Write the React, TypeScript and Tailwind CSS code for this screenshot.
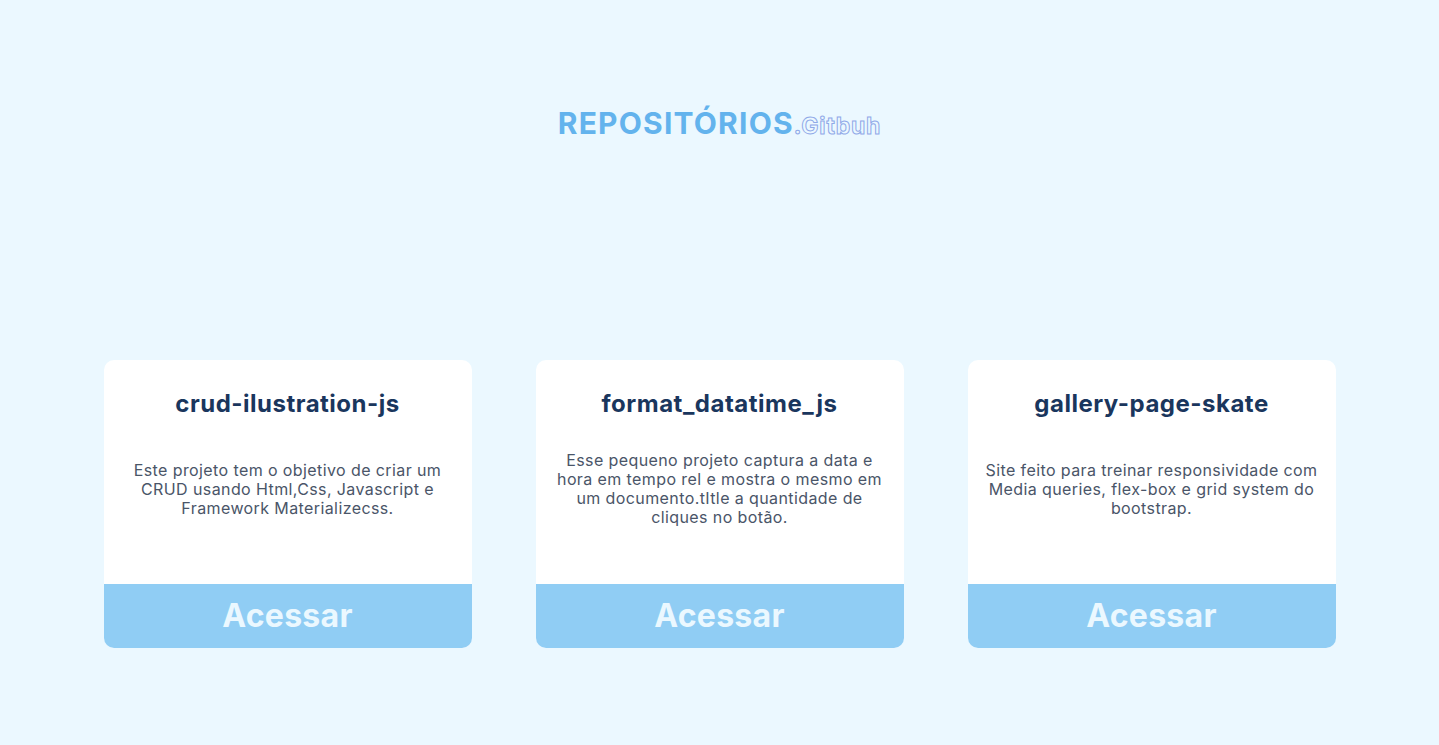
import React from "react";

const repos = [
  {
    name: "crud-ilustration-js",
    description:
      "Este projeto tem o objetivo de criar um CRUD usando Html,Css, Javascript e Framework Materializecss.",
  },
  {
    name: "format_datatime_js",
    description:
      "Esse pequeno projeto captura a data e hora em tempo rel e mostra o mesmo em um documento.tItle a quantidade de cliques no botão.",
  },
  {
    name: "gallery-page-skate",
    description:
      "Site feito para treinar responsividade com Media queries, flex-box e grid system do bootstrap.",
  },
];

function RepoCard({ name, description }: { name: string; description: string }) {
  return (
    <div className="flex h-[288px] w-[368px] flex-col overflow-hidden rounded-[10px] bg-white">
      <h2 className="pt-[28px] text-center text-[24px] font-bold leading-[32px] tracking-[0.5px] text-[#1a365d]">
        {name}
      </h2>
      <div className="flex flex-1 items-center justify-center px-[12px] pb-[26px]">
        <p className="text-center text-[16px] leading-[19px] tracking-[0.4px] text-[#4a5568]">
          {description}
        </p>
      </div>
      <a
        href="#"
        className="flex h-16 items-center justify-center bg-[#90cdf4] text-[32px] font-bold tracking-[0.3px] text-[#ebf8ff]"
      >
        Acessar
      </a>
    </div>
  );
}

export default function App() {
  return (
    <div className="min-h-[745px] bg-[#ebf8ff] font-['Inter',sans-serif]">
      <header className="flex justify-center pt-[103px]">
        <h1 className="text-[30px] font-bold leading-[40px] tracking-[1.2px] text-[#63b3ed]">
          REPOSITÓRIOS
          <span className="text-[23px] tracking-[0.8px] text-[#ebf8ff] [-webkit-text-stroke:1px_#8fa8e8]">
            .Gitbuh
          </span>
        </h1>
      </header>
      <main className="mt-[214px] flex justify-center gap-16">
        {repos.map((repo) => (
          <RepoCard key={repo.name} {...repo} />
        ))}
      </main>
    </div>
  );
}
